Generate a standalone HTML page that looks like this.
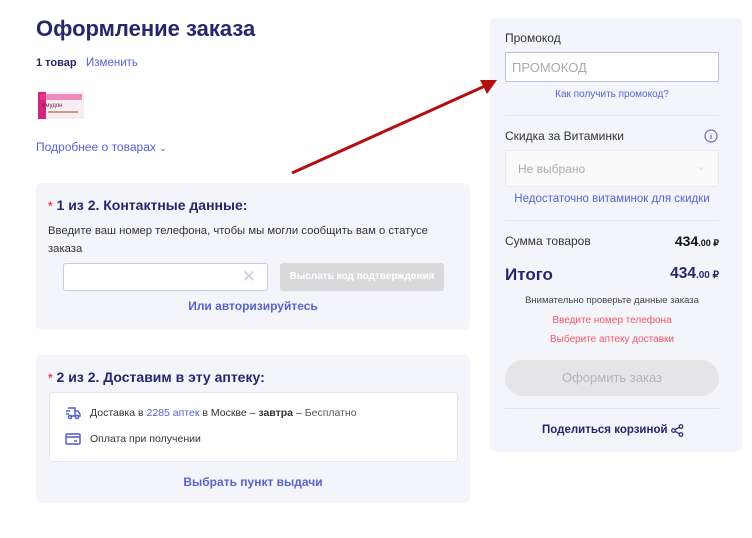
<!DOCTYPE html>
<html><head><meta charset="utf-8"><style>
*{margin:0;padding:0;box-sizing:border-box}
body{width:752px;height:538px;background:#fff;font-family:"Liberation Sans",sans-serif;position:relative;overflow:hidden;color:#2b2b33}
.a{position:absolute;white-space:nowrap}
.navy{color:#24276b}
.link{color:#5563cf}
.card{position:absolute;background:#f4f5fb;border-radius:6px}
.b{font-weight:bold}
</style></head><body>
<div class="a navy b" style="left:36px;top:16px;font-size:22px">Оформление заказа</div>
<div class="a navy b" style="left:36px;top:57px;font-size:11px">1 товар</div>
<div class="a link" style="left:86px;top:57px;font-size:11.5px">Изменить</div>
<svg class="a" style="left:38px;top:92px" width="46" height="27"><rect width="46" height="27" fill="#f7eef4"/><rect x="0" y="0" width="8" height="27" fill="#d2267c"/><rect x="2" y="2" width="42" height="6" fill="#e84a9a" opacity=".6"/><text x="4" y="15" font-size="6" fill="#7a1c4c" font-family="Liberation Sans">имудон</text><rect x="10" y="19" width="30" height="2" fill="#c98"/></svg>
<div class="a link" style="left:36px;top:140px;font-size:12px">Подробнее о товарах <span style="font-size:9px">⌄</span></div>

<div class="card" style="left:36px;top:183px;width:434px;height:147px"></div>
<div class="a navy b" style="left:48px;top:197px;font-size:14px"><span style="color:#e5474f;font-size:12px">*</span> 1 из 2. Контактные данные:</div>
<div class="a" style="left:48px;top:222px;font-size:11.3px;color:#333;line-height:18px;white-space:normal;width:400px">Введите ваш номер телефона, чтобы мы могли сообщить вам о статусе заказа</div>
<div class="a" style="left:63px;top:263px;width:205px;height:28px;background:#fff;border:1px solid #c9cbe6;border-radius:3px"><span style="position:absolute;right:11px;top:3px;color:#ccd;font-size:17px">✕</span></div>
<div class="a b" style="left:280px;top:263px;width:164px;height:28px;background:#d9d9dc;border-radius:3px;color:#fff;font-size:10px;text-align:center;line-height:28px">Выслать код подтверждения</div>
<div class="a link b" style="left:36px;width:434px;text-align:center;top:299px;font-size:12px">Или авторизируйтесь</div>

<div class="card" style="left:36px;top:355px;width:434px;height:148px"></div>
<div class="a navy b" style="left:48px;top:369px;font-size:14px"><span style="color:#e5474f;font-size:12px">*</span> 2 из 2. Доставим в эту аптеку:</div>
<div class="a" style="left:49px;top:392px;width:409px;height:70px;background:#fff;border:1px solid #e3e5f2;border-radius:4px"></div>
<svg class="a" style="left:65px;top:406px" width="16" height="14" fill="none" stroke="#4b5bd0" stroke-width="1.4"><path d="M3 2h7v8H5M10 5h3l2 3v2h-2M1 5h4M1 8h3"/><circle cx="5" cy="11" r="1.6"/><circle cx="12" cy="11" r="1.6"/></svg>
<div class="a" style="left:90px;top:407px;font-size:10.5px;color:#333">Доставка в <span class="link">2285 аптек</span> в Москве – <b>завтра</b> – <span style="color:#555">Бесплатно</span></div>
<svg class="a" style="left:65px;top:433px" width="16" height="12" fill="none" stroke="#4b5bd0" stroke-width="1.4"><rect x="1" y="1" width="14" height="10" rx="1"/><path d="M1 4h14M9 8h3"/></svg>
<div class="a" style="left:90px;top:433px;font-size:10.5px;color:#333">Оплата при получении</div>
<div class="a link b" style="left:36px;width:434px;text-align:center;top:475px;font-size:12px">Выбрать пункт выдачи</div>

<div class="card" style="left:490px;top:18px;width:252px;height:434px"></div>
<div class="a" style="left:505px;top:31px;font-size:12px;color:#333">Промокод</div>
<div class="a" style="left:505px;top:52px;width:214px;height:30px;background:#fff;border:1px solid #b9bde0;border-radius:2px;font-size:13px;color:#aaa;padding:7px 0 0 6px">ПРОМОКОД</div>
<div class="a link" style="left:505px;width:214px;text-align:center;top:89px;font-size:10px">Как получить промокод?</div>
<div class="a" style="left:505px;top:115px;width:214px;height:1px;background:#e0e2f0"></div>
<div class="a" style="left:505px;top:129px;font-size:12px;color:#333">Скидка за Витаминки</div>
<svg class="a" style="left:704px;top:129px" width="14" height="14" fill="none" stroke="#6870b8" stroke-width="1.2"><circle cx="7" cy="7" r="6"/><path d="M7 6v4M7 4v.5"/></svg>
<div class="a" style="left:505px;top:150px;width:214px;height:37px;background:#fbfafa;border:1px solid #eceaf0;border-radius:3px;font-size:12px;color:#aaa;padding:11px 0 0 12px">Не выбрано<span style="position:absolute;right:12px;top:8px;color:#ddd">⌄</span></div>
<div class="a link" style="left:505px;width:214px;text-align:center;top:193px;font-size:11.5px">Недостаточно витаминок для скидки</div>
<div class="a" style="left:505px;top:220px;width:214px;height:1px;background:#e0e2f0"></div>
<div class="a" style="left:505px;top:234px;font-size:12px;color:#333">Сумма товаров</div>
<div class="a b" style="right:33px;top:233px;font-size:14px;color:#111">434<span style="font-size:9px">.00 ₽</span></div>
<div class="a navy b" style="left:505px;top:265px;font-size:17px">Итого</div>
<div class="a navy b" style="right:33px;top:265px;font-size:15.5px">434<span style="font-size:10px">.00 ₽</span></div>
<div class="a" style="left:505px;width:214px;text-align:center;top:295px;font-size:9.5px;color:#444">Внимательно проверьте данные заказа</div>
<div class="a" style="left:505px;width:214px;text-align:center;top:315px;font-size:10px;color:#f0566a">Введите номер телефона</div>
<div class="a" style="left:505px;width:214px;text-align:center;top:334px;font-size:10px;color:#f0566a">Выберите аптеку доставки</div>
<div class="a" style="left:505px;top:360px;width:214px;height:36px;background:#e5e5e7;border-radius:18px;text-align:center;line-height:36px;font-size:13px;color:#b4b4b8">Оформить заказ</div>
<div class="a" style="left:505px;top:408px;width:214px;height:1px;background:#e0e2f0"></div>
<div class="a navy b" style="left:542px;top:424px;font-size:11.5px">Поделиться корзиной</div>
<svg class="a" style="left:671px;top:424px" width="13" height="13" fill="none" stroke="#24276b" stroke-width="1.2"><circle cx="10" cy="2.5" r="1.8"/><circle cx="10" cy="10.5" r="1.8"/><circle cx="2.5" cy="6.5" r="1.8"/><path d="M4 5.6l4.4-2.3M4 7.4l4.4 2.3"/></svg>

<svg class="a" style="left:0;top:0" width="752" height="538"><line x1="292" y1="173" x2="485" y2="86" stroke="#b30f0f" stroke-width="3"/><polygon points="497,80 480,80 487,94" fill="#b30f0f"/></svg>
</body></html>
